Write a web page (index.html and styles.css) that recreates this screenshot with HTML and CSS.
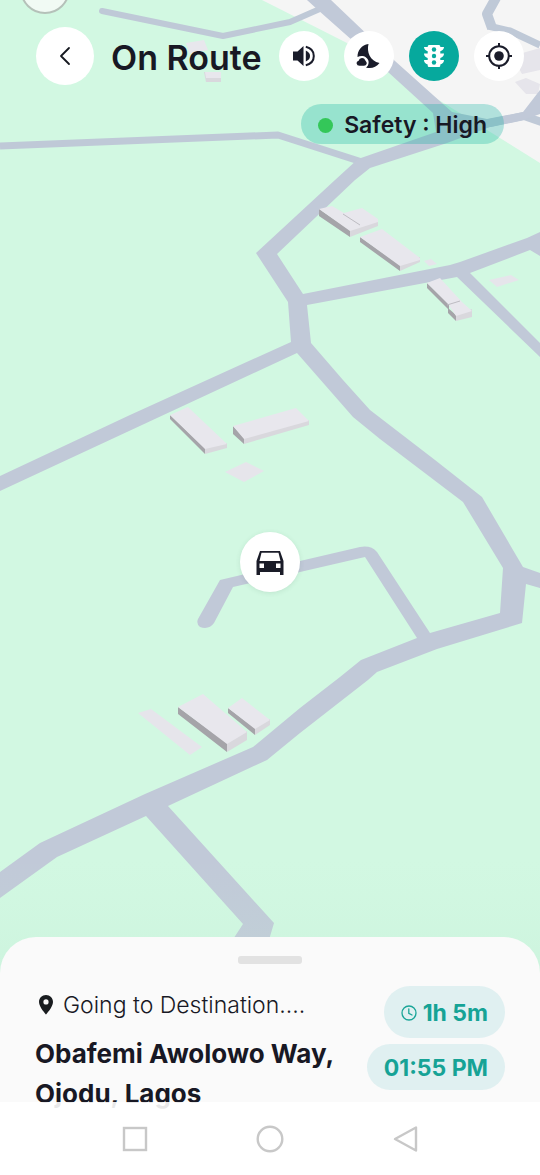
FILE: index.html
```html
<!DOCTYPE html>
<html lang="en">
<head>
<meta charset="utf-8">
<meta name="viewport" content="width=device-width, initial-scale=1">
<title>On Route</title>
<link rel="stylesheet" href="styles.css">
</head>
<body>
<div class="screen">
  <svg class="map" viewBox="0 0 540 1175" preserveAspectRatio="xMidYMin slice" aria-hidden="true">
    <defs>
      <linearGradient id="shade" x1="0" y1="0" x2="0" y2="1">
        <stop offset="0" stop-color="#c4eed8" stop-opacity="0"/>
        <stop offset="1" stop-color="#bce6d0" stop-opacity=".25"/>
      </linearGradient>
    </defs>
    <path class="urban" d="M262 0 347 43 540 163V0Z"/>
    <g class="block">
      <path d="M512 56 540 48V70L522 74ZM515 82 526 78 540 84 538 94 526 94Z"/>
      <path d="M489 280 511 275 519 280 497 287ZM424 261 431 259 437 264 429 266ZM225 472 246 462 264 471 244 482ZM138 713 151 709 202 747 190 755Z"/>
    </g>
    <g class="lane">
      <path stroke-width="6" stroke-linecap="round" d="M102 11 223 36 290 22 322 8"/>
      <path stroke-width="7" d="M0 146 278 135 362 162"/>
      <path stroke-width="10" d="M497-4 487 14 492 28"/>
      <path stroke-width="7" d="M488 26 510 31 540 45"/>
      <path stroke-width="8" d="M436 126 490 123 524 116 544 123"/>
    </g>
    <path class="road" d="M307 0H331L395 61 452 112 487 119 523 112 540 90V114L523 120 490 127 447 143 370 168 355 180 277 254 303 294 450 265 460 262 527 238 540 232V256L530 250 470 273 540 343V357L457 277 307 305 311 343 343 380 370 410 435 460 482 497 523 567 540 573V588L526 584 522 623 437 649 377 672 368 680 300 733 267 760 168 806 274 923 266 950H226L243 924 146 816 57 857 0 898V872L40 843 145 794 253 747 300 708 340 677 361 660 417 638 365 557 300 572 233 587 214 623Q209 630 200 627 196 624 198 619L220 580 300 561 360 547Q371 545 377 552L430 633 500 613 503 568 463 502 380 439 353 417 297 353 0 491V476L130 415 291 342 288 302 256 253 335 180 358 159 436 132 433 113 388 72 318 10Z"/>
    <g class="wall">
      <path d="M319 209 350 230V237L319 216ZM360 237 400 265V271L360 242ZM427 283 449 304V310L427 288ZM448 308 456 315V321L448 313ZM170 415 205 448V454L170 419ZM233 426 244 438V444L233 434ZM178 707 227 743V752L178 714ZM228 708 255 728V735L228 713Z"/>
    </g>
    <g class="side">
      <path d="M350 230 378 220V226L350 237ZM400 265 420 257V262L400 271ZM456 315 472 309V317L456 321ZM205 448 227 443V448L205 454ZM244 438 309 420V425L244 444ZM227 743 247 731V740L227 752ZM255 728 270 719V725L255 735ZM204 72H221V82H206Z"/>
    </g>
    <g class="roof">
      <path d="M319 209 332 206 344 213 362 208 378 219V222L350 231ZM360 237 382 229 420 258V260L400 266ZM427 283 440 278 462 302 472 311 456 316 448 304ZM170 415 188 407 227 444 205 449ZM233 426 296 408 309 421 244 439ZM178 707 203 694 247 732 227 744ZM228 708 242 698 270 720 255 729ZM186 43 204 40 208 50 190 54ZM205 72H221V78H206Z"/>
    </g>
    <path class="seam" d="M343 214 360 225M447 305 460 301"/>
    <rect y="860" width="540" height="120" fill="url(#shade)"/>
    <circle class="puck" cx="45" cy="-11" r="24"/>
  </svg>

  <main class="stage">
    <header class="top">
      <button class="round back" type="button" aria-label="Back">
        <svg width="20" height="20" viewBox="0 0 20 20" fill="none" stroke="#15181f" stroke-width="1.8" stroke-linecap="round" stroke-linejoin="round"><path d="M14 2 6 10 14 18"/></svg>
      </button>
      <h1 class="title">On Route</h1>
      <div class="tools">
        <button class="round" type="button" aria-label="Sound">
          <svg width="26" height="26" viewBox="0 0 26 26"><path fill="#1a1c2a" d="M2 8.500H6.500L12.500 3V23L6.500 17.500H2Z"/><path fill="#1a1c2a" d="M14.800 7.500C17.800 9 19 10.500 19 13S17.800 17 14.800 18.500Z"/><path d="M14.800 3.800C20 5 22.800 8.500 22.800 13S20 21 14.800 22.200" fill="none" stroke="#1a1c2a" stroke-width="2"/></svg>
        </button>
        <button class="round" type="button" aria-label="Night mode">
          <svg width="26" height="26" viewBox="0 0 26 26" fill="#1a1c2a"><path d="M12.500 1C10.500 9 14 18 23.500 20 20 24.500 15 26 10 24.500 12 23 13 20.500 12.500 18 11.500 14 6.500 11.500 1.500 14 1.500 7.500 5.500 2 12.500 1Z"/><path stroke="#fff" stroke-width="1.400" d="M3.500 23.500C-1 23.500-1 18 2 17.300 3 13.500 8.800 13.300 10 17.200 12.500 19.500 11.500 23.500 8 23.500Z"/></svg>
        </button>
        <button class="round active" type="button" aria-label="Traffic" aria-pressed="true">
          <svg width="24" height="24" viewBox="0 0 24 24"><path fill="#fff" d="M7 1H17Q18.300 1 18.300 2.500V3H22Q22 5.800 18.300 7.300V9.500H22Q22 12.500 18.300 14V16H22Q22 19 18.300 20.500V21.500Q18.300 23 17 23H7Q5.700 23 5.700 21.500V20.500Q2 19 2 16H5.700V14Q2 12.500 2 9.500H5.700V7.300Q2 5.800 2 3H5.700V2.500Q5.700 1 7 1Z"/><g fill="#06a99d"><circle cx="12" cy="5.500" r="2.200"/><circle cx="12" cy="12" r="2.200"/><circle cx="12" cy="18.500" r="2.200"/></g></svg>
        </button>
        <button class="round" type="button" aria-label="My location">
          <svg width="28" height="28" viewBox="0 0 28 28" fill="none" stroke="#1a1c2a" stroke-width="2"><circle cx="14" cy="14" r="9.800"/><circle cx="14" cy="14" r="4.800" fill="#1a1c2a" stroke="none"/><path d="M14 1V5M14 23V27M1 14H5M23 14H27"/></svg>
        </button>
      </div>
    </header>
    <p class="safety"><span class="dot"></span>Safety : High</p>
    <div class="vehicle" role="img" aria-label="Your car">
      <svg width="28" height="28" viewBox="0 0 28 28"><path fill="#1a1c28" fill-rule="evenodd" d="M4 3H24L27.500 13V27H24V24H4V27H.5V13ZM5.500 4.800 3.500 13H24.500L22.500 4.800Z"/><path fill="#fff" d="M3.500 15.500H8V20H3.500ZM20 15.500H24.500V20H20Z"/></svg>
    </div>
  </main>

  <section class="sheet">
    <div class="handle"></div>
    <div class="trip">
      <div class="place">
        <p class="status">
          <svg width="14" height="20" viewBox="0 0 14 20"><path fill="#191c1f" fill-rule="evenodd" d="M7 0C3 0 0 3 0 7 0 12 7 19.500 7 19.500S14 12 14 7C14 3 11 0 7 0ZM7 4.300A2.600 2.600 0 1 1 7 9.500 2.600 2.600 0 1 1 7 4.300Z"/></svg>
          Going to Destination....
        </p>
        <h2 class="address">Obafemi Awolowo Way, Ojodu, Lagos</h2>
      </div>
      <div class="times">
        <p class="time tall">
          <svg width="16" height="16" viewBox="0 0 16 16" fill="none" stroke="#1aa598" stroke-width="1.300" stroke-linecap="round"><circle cx="8" cy="8" r="7"/><path d="M7.800 3.800V8.300L11 10"/></svg>
          1h 5m
        </p>
        <p class="time">01:55 PM</p>
      </div>
    </div>
  </section>

  <nav class="system">
    <button type="button" aria-label="Recent apps"><svg width="28" height="28" viewBox="0 0 28 28"><rect x="3" y="3" width="22" height="22"/></svg></button>
    <button type="button" aria-label="Home"><svg width="28" height="28" viewBox="0 0 28 28"><circle cx="14" cy="14" r="12.300"/></svg></button>
    <button type="button" aria-label="Back"><svg width="28" height="28" viewBox="0 0 28 28"><path stroke-linejoin="round" d="M25 2.500V25.500L4 14Z"/></svg></button>
  </nav>
</div>
</body>
</html>
```
FILE: styles.css
```css
* { box-sizing: border-box; }

body {
  margin: 0;
  font-family: Inter, "Liberation Sans", sans-serif;
  color: #181824;
}

h1, h2, p { margin: 0; }

button {
  padding: 0;
  border: 0;
  background: none;
}

svg { display: block; flex: none; }

.screen {
  position: relative;
  display: flex;
  flex-direction: column;
  min-height: 100vh;
  overflow: hidden;
  background: #d2f8e2;
}

.map {
  position: absolute;
  inset: 0;
  width: 100%;
  height: 100%;
}

.urban { fill: #f5f5f5; }
.road { fill: #c1c9d8; }
.lane { fill: none; stroke: #bfc9d7; stroke-linejoin: round; }
.block { fill: #e6e5eb; }
.roof { fill: #e8e7ed; }
.side { fill: #d9d8dd; }
.wall { fill: #a5a4a9; }
.seam { fill: none; stroke: #bdbcc2; }
.puck { fill: #f1faf4; stroke: #b5c1b9; stroke-width: 2; }

.stage {
  position: relative;
  flex: 1;
  display: flex;
  flex-direction: column;
}

.top {
  display: flex;
  align-items: center;
  padding: 27px 16px 0 36px;
}

.round {
  display: grid;
  place-items: center;
  width: 50px;
  height: 50px;
  border-radius: 50%;
  background: #fff;
}

.round.back { width: 58px; height: 58px; }
.round.active { background: #06a99d; }

.title {
  margin-left: 17px;
  padding-top: 4px;
  font-size: 34px;
  line-height: 40px;
  font-weight: 600;
  white-space: nowrap;
}

.tools {
  display: flex;
  gap: 15px;
  margin-left: auto;
}

.safety {
  display: flex;
  align-items: center;
  align-self: flex-end;
  gap: 11px;
  margin: 19px 36px 0 0;
  padding: 2px 17px 0;
  border-radius: 20px;
  background: rgba(0, 172, 155, .28);
  font-size: 23px;
  line-height: 38px;
  font-weight: 600;
}

.dot {
  width: 15px;
  height: 15px;
  border-radius: 50%;
  background: #34c759;
}

.vehicle {
  position: absolute;
  top: 60%;
  left: 50%;
  transform: translate(-50%, -50%);
  display: grid;
  place-items: center;
  width: 60px;
  height: 60px;
  border-radius: 50%;
  background: #fff;
  box-shadow: 0 1px 5px rgba(60, 90, 75, .12);
}

.sheet {
  position: relative;
  padding: 19px 35px 61px;
  border-radius: 36px 36px 0 0;
  background: #fafafa;
}

.handle {
  width: 64px;
  height: 8px;
  margin: 0 auto 22px;
  border-radius: 3px;
  background: #e2e2e2;
}

.trip {
  display: flex;
  justify-content: space-between;
}

.place { flex: 1; min-width: 0; }

.status {
  display: flex;
  align-items: center;
  gap: 10px;
  padding-left: 4px;
  font-size: 23px;
  line-height: 38px;
  font-weight: 300;
  white-space: nowrap;
}

.address {
  margin-top: 10px;
  font-size: 26px;
  line-height: 40px;
  font-weight: 700;
}

.times {
  display: flex;
  flex-direction: column;
  align-items: flex-end;
  gap: 6px;
}

.time {
  display: flex;
  align-items: center;
  gap: 6px;
  padding: 2px 17px 0;
  border-radius: 26px;
  background: #e0f0f1;
  color: #16a396;
  font-size: 23px;
  line-height: 44px;
  font-weight: 700;
  white-space: nowrap;
}

.time.tall { line-height: 50px; }

.system {
  position: relative;
  display: flex;
  justify-content: center;
  gap: 107px;
  margin-top: -73px;
  padding: 23px 0 22px;
  background: rgba(255, 255, 255, .9);
  fill: none;
  stroke: #c8c8c8;
  stroke-width: 2.4px;
}
```
